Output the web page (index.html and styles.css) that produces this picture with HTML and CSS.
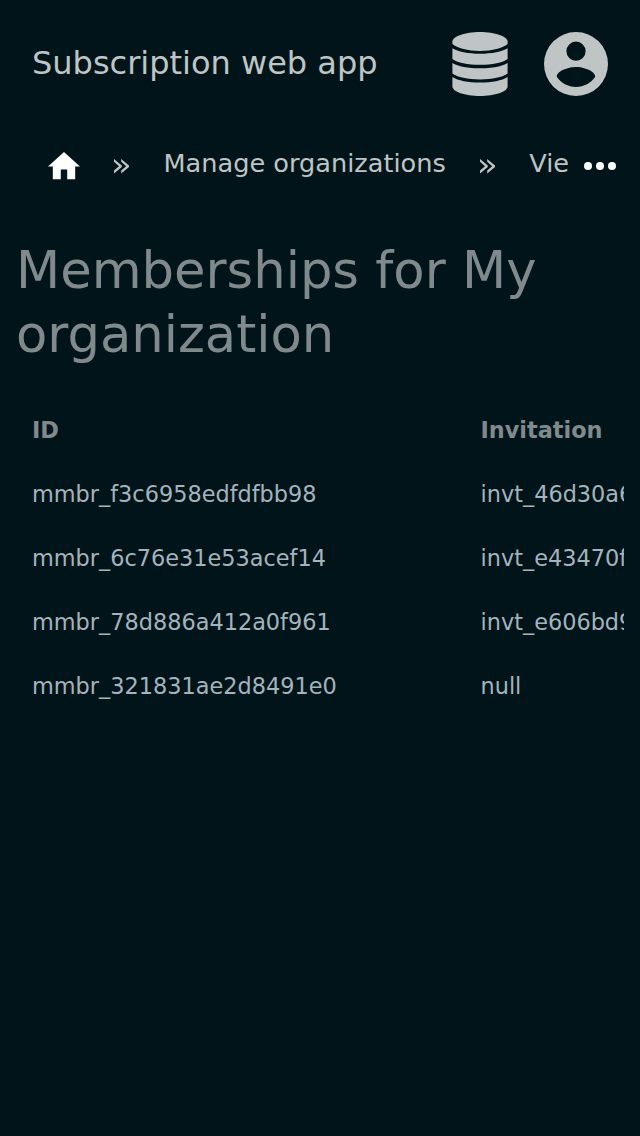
FILE: index.html
```html
<!DOCTYPE html>
<html lang="en">
<head>
<meta charset="utf-8">
<title>Subscription web app</title>
<link rel="stylesheet" href="styles.css">
</head>
<body>
<header class="topbar">
  <span class="brand">Subscription web app</span>
  <svg class="icon" viewBox="0 0 64 64" aria-label="Database">
    <path d="M4.400 9.500C4.400 4.500 17 0 32 0S59.600 4.500 59.600 9.500V12C55 16 44 19 32 19S9 16 4.400 12Z"/>
    <path d="M4.400 16.200C10 19.600 20 21.700 32 21.700S54 19.600 59.600 16.200V27C55 30.600 44 32.800 32 32.800S9 30.600 4.400 27Z"/>
    <path d="M4.400 30.900C10 34.300 20 36.200 32 36.200S54 34.300 59.600 30.900V41.500C55 45.200 44 47.400 32 47.400S9 45.200 4.400 41.500Z"/>
    <path d="M4.400 45C10 48.600 20 50.600 32 50.600S54 48.600 59.600 45V54.500C59.600 59.600 47 64 32 64S4.400 59.600 4.400 54.500Z"/>
  </svg>
  <svg class="icon" viewBox="0 0 64 64" aria-label="Account">
    <path fill-rule="evenodd" d="M32 0a32 32 0 1 0 0 64a32 32 0 1 0 0-64ZM32 9.600a9.600 9.600 0 1 1 0 19.200a9.600 9.600 0 1 1 0-19.200ZM32 55C24 55 17 51 12.800 44.800C13 38.300 25.500 35 32 35S51 38.300 51.200 44.800C47 51 40 55 32 55Z"/>
  </svg>
</header>
<nav class="crumbs">
  <svg class="home" viewBox="0 0 32 27.200" aria-label="Home"><path d="M16 0L32 14.400H27.200V27.200H19.200V17.600H12.800V27.200H4.800V14.400H0Z"/></svg>
  <span class="sep"><svg class="chevrons" viewBox="0 0 15 14.400"><path d="M0 0L7.800 6.500V7.900L0 14.400V11.600L5 7.200L0 2.800ZM7.200 0L15 6.500V7.900L7.200 14.400V11.600L12.200 7.200L7.200 2.800Z"/></svg></span>
  <span class="crumb">Manage organizations</span>
  <span class="sep"><svg class="chevrons" viewBox="0 0 15 14.400"><path d="M0 0L7.800 6.500V7.900L0 14.400V11.600L5 7.200L0 2.800ZM7.200 0L15 6.500V7.900L7.200 14.400V11.600L12.200 7.200L7.200 2.800Z"/></svg></span>
  <span class="crumb clipped">View organization</span>
  <svg class="more" viewBox="0 0 32 8" aria-label="More"><circle cx="4" cy="4" r="4"/><circle cx="16" cy="4" r="4"/><circle cx="28" cy="4" r="4"/></svg>
</nav>
<main class="content">
  <h1 class="title">Memberships for My organization</h1>
  <div class="scroller">
    <table class="members">
      <thead><tr><th>ID</th><th>Invitation</th></tr></thead>
      <tbody>
        <tr><td>mmbr_f3c6958edfdfbb98</td><td>invt_46d30a6</td></tr>
        <tr><td>mmbr_6c76e31e53acef14</td><td>invt_e43470f</td></tr>
        <tr><td>mmbr_78d886a412a0f961</td><td>invt_e606bd9</td></tr>
        <tr><td>mmbr_321831ae2d8491e0</td><td>null</td></tr>
      </tbody>
    </table>
  </div>
</main>
</body>
</html>
```
FILE: styles.css
```css
* { box-sizing: border-box; }
body {
  margin: 0;
  min-height: 1136px;
  background: #001419;
  color: #bfc4c5;
  font-family: "DejaVu Sans", sans-serif;
}
.topbar {
  display: flex;
  align-items: center;
  gap: 32px;
  height: 128px;
  padding: 0 32px;
}
.brand { flex: 1; font-size: 32px; line-height: 64px; padding-bottom: 2px; }
.icon { width: 64px; height: 64px; fill: #bfc4c5; }
.crumbs {
  display: flex;
  align-items: center;
  height: 72px;
  padding: 0 24px 0 48px;
  font-size: 25.6px;
  line-height: 32px;
  white-space: nowrap;
}
.home { width: 32px; height: 27.2px; margin-top: 4px; fill: #fff; flex: none; }
.sep { display: flex; width: 83.5px; padding: 5px 0 0 34.4px; flex: none; }
.chevrons { width: 15px; height: 14.4px; fill: #bfc4c5; }
.crumb { flex: none; padding-bottom: 2px; }
.clipped { width: 39px; overflow: hidden; }
.more { width: 32px; height: 8px; margin: 4px 0 0 16px; fill: #fff; flex: none; }
.content { padding: 38px 16px 0; }
.title {
  margin: 0;
  color: #80898b;
  font-size: 51.2px;
  font-weight: 400;
  line-height: 64px;
}
.scroller { margin-top: 32px; overflow: hidden; }
.members {
  width: 900px;
  table-layout: fixed;
  border-collapse: collapse;
  font-size: 22.4px;
}
.members th, .members td {
  height: 64px;
  padding: 0 16px;
  text-align: left;
  white-space: nowrap;
}
.members th:first-child { width: 448.5px; }
.members th { color: #80898b; font-weight: 700; }
.members td { color: #a5b3bd; }
```
